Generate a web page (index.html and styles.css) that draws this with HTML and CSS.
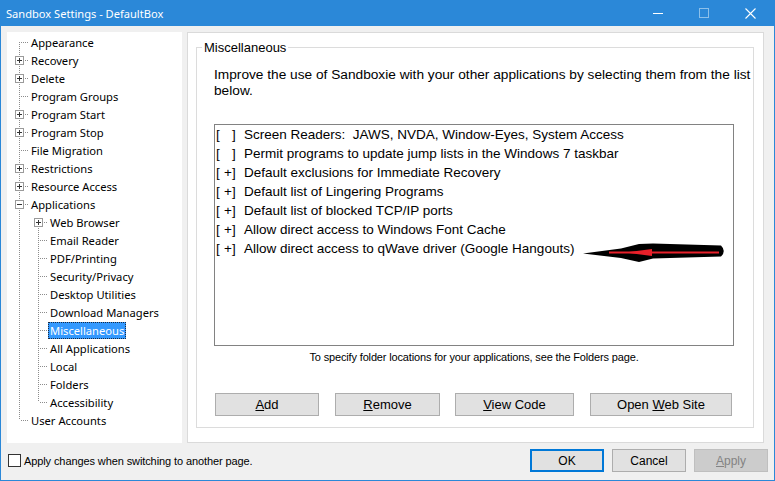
FILE: index.html
```html
<!DOCTYPE html>
<html>
<head>
<meta charset="utf-8">
<title>Sandbox Settings - DefaultBox</title>
<link rel="stylesheet" href="styles.css">
</head>
<body>
<div class="window">
  <div class="titlebar">
    <span class="title">Sandbox Settings - DefaultBox</span>
    <div class="caps">
      <span class="cap"><svg width="10" height="10" viewBox="0 0 10 10"><path d="M0 5.5H10" stroke="#fff" stroke-width="1"/></svg></span>
      <span class="cap"><svg width="10" height="10" viewBox="0 0 10 10"><rect x="0.5" y="0.5" width="9" height="9" fill="none" stroke="#8cc0ea" stroke-width="1"/></svg></span>
      <span class="cap"><svg width="11" height="11" viewBox="0 0 11 11"><path d="M0.5 0.5L10.5 10.5M10.5 0.5L0.5 10.5" stroke="#fff" stroke-width="1.1"/></svg></span>
    </div>
  </div>
  <div class="client">
    <div class="main">
      <div class="tree">
        <div class="row"><span class="g first"></span><span class="lbl">Appearance</span></div>
        <div class="row"><span class="g tee"><svg class="exp" width="9" height="9" viewBox="0 0 9 9"><rect x="0.5" y="0.5" width="8" height="8" fill="#fff" stroke="#9a9a9a"/><path d="M2 4.5H7M4.5 2V7" stroke="#333"/></svg></span><span class="lbl">Recovery</span></div>
        <div class="row"><span class="g tee"><svg class="exp" width="9" height="9" viewBox="0 0 9 9"><rect x="0.5" y="0.5" width="8" height="8" fill="#fff" stroke="#9a9a9a"/><path d="M2 4.5H7M4.5 2V7" stroke="#333"/></svg></span><span class="lbl">Delete</span></div>
        <div class="row"><span class="g tee"></span><span class="lbl">Program Groups</span></div>
        <div class="row"><span class="g tee"><svg class="exp" width="9" height="9" viewBox="0 0 9 9"><rect x="0.5" y="0.5" width="8" height="8" fill="#fff" stroke="#9a9a9a"/><path d="M2 4.5H7M4.5 2V7" stroke="#333"/></svg></span><span class="lbl">Program Start</span></div>
        <div class="row"><span class="g tee"><svg class="exp" width="9" height="9" viewBox="0 0 9 9"><rect x="0.5" y="0.5" width="8" height="8" fill="#fff" stroke="#9a9a9a"/><path d="M2 4.5H7M4.5 2V7" stroke="#333"/></svg></span><span class="lbl">Program Stop</span></div>
        <div class="row"><span class="g tee"></span><span class="lbl">File Migration</span></div>
        <div class="row"><span class="g tee"><svg class="exp" width="9" height="9" viewBox="0 0 9 9"><rect x="0.5" y="0.5" width="8" height="8" fill="#fff" stroke="#9a9a9a"/><path d="M2 4.5H7M4.5 2V7" stroke="#333"/></svg></span><span class="lbl">Restrictions</span></div>
        <div class="row"><span class="g tee"><svg class="exp" width="9" height="9" viewBox="0 0 9 9"><rect x="0.5" y="0.5" width="8" height="8" fill="#fff" stroke="#9a9a9a"/><path d="M2 4.5H7M4.5 2V7" stroke="#333"/></svg></span><span class="lbl">Resource Access</span></div>
        <div class="row"><span class="g tee"><svg class="exp" width="9" height="9" viewBox="0 0 9 9"><rect x="0.5" y="0.5" width="8" height="8" fill="#fff" stroke="#9a9a9a"/><path d="M2 4.5H7" stroke="#333"/></svg></span><span class="lbl">Applications</span></div>
        <div class="row"><span class="g line"></span><span class="g first"><svg class="exp" width="9" height="9" viewBox="0 0 9 9"><rect x="0.5" y="0.5" width="8" height="8" fill="#fff" stroke="#9a9a9a"/><path d="M2 4.5H7M4.5 2V7" stroke="#333"/></svg></span><span class="lbl">Web Browser</span></div>
        <div class="row"><span class="g line"></span><span class="g tee"></span><span class="lbl">Email Reader</span></div>
        <div class="row"><span class="g line"></span><span class="g tee"></span><span class="lbl">PDF/Printing</span></div>
        <div class="row"><span class="g line"></span><span class="g tee"></span><span class="lbl">Security/Privacy</span></div>
        <div class="row"><span class="g line"></span><span class="g tee"></span><span class="lbl">Desktop Utilities</span></div>
        <div class="row"><span class="g line"></span><span class="g tee"></span><span class="lbl">Download Managers</span></div>
        <div class="row"><span class="g line"></span><span class="g tee"></span><span class="lbl sel">Miscellaneous</span></div>
        <div class="row"><span class="g line"></span><span class="g tee"></span><span class="lbl">All Applications</span></div>
        <div class="row"><span class="g line"></span><span class="g tee"></span><span class="lbl">Local</span></div>
        <div class="row"><span class="g line"></span><span class="g tee"></span><span class="lbl">Folders</span></div>
        <div class="row"><span class="g line"></span><span class="g last"></span><span class="lbl">Accessibility</span></div>
        <div class="row"><span class="g last"></span><span class="lbl">User Accounts</span></div>
      </div>
      <div class="page">
        <fieldset class="group">
          <legend>Miscellaneous</legend>
          <p class="desc">Improve the use of Sandboxie with your other applications by selecting them from the list<br>below.</p>
          <div class="listbox">
            <div class="item"><span class="cb"><span class="b1">[</span><span class="mid"></span><span>]</span></span>Screen Readers:&nbsp; JAWS, NVDA, Window-Eyes, System Access</div>
            <div class="item"><span class="cb"><span class="b1">[</span><span class="mid"></span><span>]</span></span>Permit programs to update jump lists in the Windows 7 taskbar</div>
            <div class="item"><span class="cb"><span class="b1">[</span><span class="mid">+</span><span>]</span></span>Default exclusions for Immediate Recovery</div>
            <div class="item"><span class="cb"><span class="b1">[</span><span class="mid">+</span><span>]</span></span>Default list of Lingering Programs</div>
            <div class="item"><span class="cb"><span class="b1">[</span><span class="mid">+</span><span>]</span></span>Default list of blocked TCP/IP ports</div>
            <div class="item"><span class="cb"><span class="b1">[</span><span class="mid">+</span><span>]</span></span>Allow direct access to Windows Font Cache</div>
            <div class="item"><span class="cb"><span class="b1">[</span><span class="mid">+</span><span>]</span></span>Allow direct access to qWave driver (Google Hangouts)</div>
            <svg class="arrow" width="145" height="24" viewBox="0 0 145 24">
              <path d="M2 12.5 L40 7.5 L58 3 L72 2.5 L140 4.5 Q145.5 10 140 15.5 L72 17.5 L58 21 L40 17 Z" fill="#000"/>
              <path d="M28 11.5 H138" stroke="#e8202a" stroke-width="2"/>
              <path d="M44 11.5 L71 8 L71 15 Z" fill="#e8202a"/>
            </svg>
          </div>
          <p class="note">To specify folder locations for your applications, see the Folders page.</p>
          <div class="btns">
            <button class="btn w-add"><u>A</u>dd</button>
            <button class="btn w-rem"><u>R</u>emove</button>
            <button class="btn w-view"><u>V</u>iew Code</button>
            <button class="btn w-web">Open <u>W</u>eb Site</button>
          </div>
        </fieldset>
      </div>
    </div>
    <div class="footer">
      <label class="chk"><span class="box"></span><span>Apply changes when switching to another page.</span></label>
      <div class="dlg">
        <button class="dbtn default">OK</button>
        <button class="dbtn">Cancel</button>
        <button class="dbtn disabled"><u>A</u>pply</button>
      </div>
    </div>
  </div>
</div>
</body>
</html>
```
FILE: styles.css
```css
* { box-sizing: border-box; }
html, body { margin: 0; padding: 0; }
body { width: 775px; height: 481px; overflow: hidden; background: #f0f0f0; }

.window {
  width: 775px; height: 481px;
  border: 1px solid #2b88d8; border-top: 0;
  background: #f0f0f0;
  display: flex; flex-direction: column;
}
.titlebar {
  height: 26px; flex: none;
  background: #2b88d8; color: #fff;
  display: flex; align-items: center;
  margin: 0 -1px;
  padding-left: 6px;
}
.title { font-family: "Noto Sans", sans-serif; font-size: 11.1px; flex: 1; }
.caps { display: flex; height: 26px; margin-right: 2px; }
.cap { width: 46px; height: 26px; display: flex; align-items: center; justify-content: center; }

.client { flex: 1; display: flex; flex-direction: column; padding: 6px 10px 0 6px; }
.main { display: flex; gap: 5px; height: 411px; flex: none; }

.tree {
  width: 175px; height: 411px; background: #fff; flex: none;
  padding-top: 0;
  font-family: "Noto Sans", sans-serif; font-size: 11.2px; color: #000;
}
.row { display: flex; align-items: center; height: 18px; }
.g { position: relative; width: 19px; height: 18px; flex: none; }
.g::before {
  content: ""; position: absolute; left: 12px; top: 0; bottom: 0; width: 1px;
  background: repeating-linear-gradient(to bottom, #8c8c8c 0 1px, transparent 1px 2px);
}
.g.first::before { top: 10px; }
.g.last::before { bottom: 8px; }
.g.tee::after, .g.first::after, .g.last::after {
  content: ""; position: absolute; left: 13px; top: 10px; width: 9px; height: 1px;
  background: repeating-linear-gradient(to right, transparent 0 1px, #8c8c8c 1px 2px);
}
.exp { position: absolute; left: 8px; top: 6px; z-index: 1; display: block; }
.lbl { margin-left: 3px; padding: 0 2px; height: 17px; line-height: 17px; white-space: nowrap; position: relative; top: 1px; }
.lbl.sel { background: #3399ff; color: #fff; outline: 1px dotted #1a2a40; outline-offset: -1px; }

.page {
  width: 577px; height: 411px; flex: none;
  background: #fff; border: 1px solid #dadada;
  padding: 7px 9px 0 8px;
}
.group {
  margin: 0; height: 388px;
  border: 1px solid #dcdcdc;
  padding: 0 0 0 17px;
  font-family: "Liberation Sans", Arial, sans-serif; font-size: 13px; color: #000;
}
.group legend { padding: 0 2px; margin-left: -12px; line-height: 15px; }
.desc { margin: 12px 0 0 0; line-height: 16px; white-space: nowrap; font-size: 13.7px; }
.listbox {
  position: relative;
  margin-top: 25px; width: 520px; height: 222px;
  border: 1px solid #828282; background: #fff;
}
.item { height: 19px; line-height: 19px; display: flex; white-space: nowrap; font-size: 13.5px; }
.cb { display: inline-flex; width: 29px; padding-left: 1px; flex: none; }
.b1 { width: 8px; }
.mid { width: 8px; }
.arrow { position: absolute; left: 366px; top: 116px; }

.note {
  margin: 4px 0 0 0; width: 520px; text-align: center; line-height: 14px;
  font-family: "Liberation Sans", Arial, sans-serif; font-size: 11px; letter-spacing: -0.15px;
}
.btns { display: flex; margin-top: 29px; padding-left: 1px; }
.btn {
  height: 23px; margin: 0 16px 0 0; padding: 0;
  background: #e1e1e1; border: 1px solid #adadad; border-radius: 0;
  font-family: "Liberation Sans", Arial, sans-serif; font-size: 13px; color: #000;
}
.w-add { width: 104px; }
.w-rem { width: 105px; margin-right: 15px; }
.w-view { width: 119px; }
.w-web { width: 142px; }

.footer { flex: 1; display: flex; align-items: center; justify-content: space-between; padding: 0 0 2px 1px; }
.chk { display: flex; align-items: center; font-family: "Liberation Sans", Arial, sans-serif; font-size: 11px; letter-spacing: -0.1px; color: #000; }
.box { width: 13px; height: 13px; border: 1px solid #333; background: #fff; margin-right: 3px; }
.dlg { display: flex; gap: 8px; margin-right: -4px; }
.dbtn {
  width: 74px; height: 23px; padding: 0;
  background: #e1e1e1; border: 1px solid #adadad; border-radius: 0;
  font-family: "Liberation Sans", Arial, sans-serif; font-size: 12px; color: #000;
}
.dbtn.default { border: 2px solid #0078d7; }
.dbtn.disabled { background: #cccccc; border-color: #bfbfbf; color: #838383; }
```
